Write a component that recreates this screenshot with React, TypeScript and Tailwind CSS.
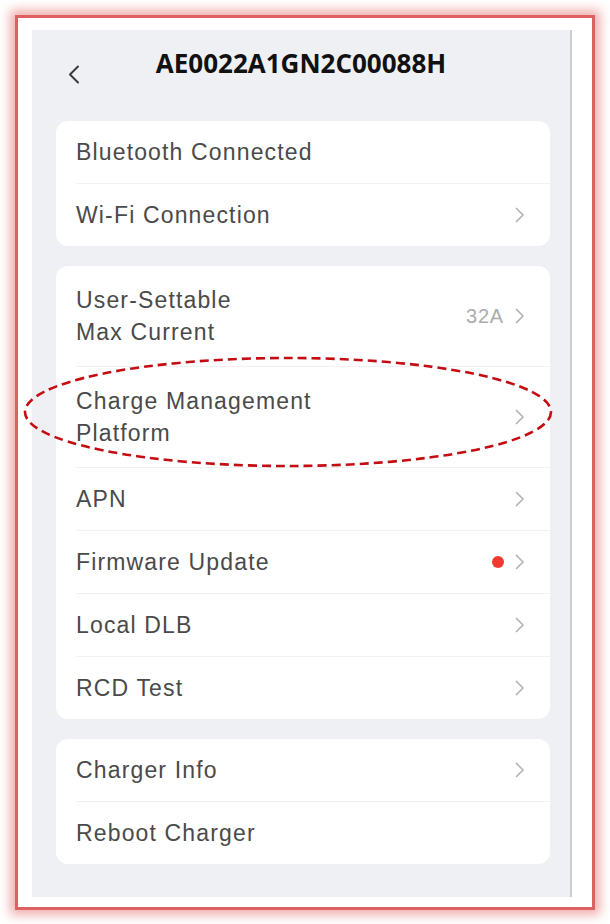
import * as React from "react";

type row = {
  label: string[];
  value?: string;
  dot?: boolean;
  arrow?: boolean;
  tall?: boolean;
};

const groups: row[][] = [
  [
    { label: ["Bluetooth Connected"] },
    { label: ["Wi-Fi Connection"], arrow: true },
  ],
  [
    { label: ["User-Settable", "Max Current"], value: "32A", arrow: true, tall: true },
    { label: ["Charge Management", "Platform"], arrow: true, tall: true },
    { label: ["APN"], arrow: true },
    { label: ["Firmware Update"], dot: true, arrow: true },
    { label: ["Local DLB"], arrow: true },
    { label: ["RCD Test"], arrow: true },
  ],
  [
    { label: ["Charger Info"], arrow: true },
    { label: ["Reboot Charger"] },
  ],
];

const Chevron = () => (
  <svg width="10" height="16" viewBox="0 0 10 16" fill="none">
    <path d="M1.5 1.5 L8 8 L1.5 14.5" stroke="#b4b4b6" strokeWidth="1.7" strokeLinecap="round" strokeLinejoin="round" />
  </svg>
);

const Row = ({ item, last }: { item: row; last: boolean }) => {
  return (
    <div className="ml-[20px]">
      <div
        className={
          "flex items-center justify-between pr-[25px] " +
          (item.tall ? "py-[18px] " : "py-[15px] ") +
          (last ? "" : "border-b border-[#f1f1f3]")
        }
      >
        <div className="text-[23px] leading-[32px] tracking-[0.05em] text-[#4a4a4a] [font-family:'Liberation_Sans',Arial,sans-serif]">
          {item.label.map((l) => (
            <div key={l}>{l}</div>
          ))}
        </div>
        <div className="flex items-center gap-[11px]">
          {item.value && (
            <span className="text-[20px] tracking-[0.04em] text-[#ababad] [font-family:'Liberation_Sans',Arial,sans-serif]">
              {item.value}
            </span>
          )}
          {item.dot && <span className="w-[12px] h-[12px] rounded-full bg-[#f23a32]" />}
          {item.arrow && <Chevron />}
        </div>
      </div>
    </div>
  );
};

const App = () => {
  return (
    <div className="w-[610px] h-[924px] bg-white pt-[18px] pl-[18px]">
      <div className="relative w-[574px] h-[889px] bg-white pt-[12px] pl-[14px] shadow-[0_0_0_3px_rgba(218,88,88,0.9),0_0_10px_8px_rgba(228,108,108,0.55)]">
        <div className="w-[540px] h-[867px] bg-[#eff0f4] border-r-2 border-[#ccccd0]">
          {/* header */}
          <div className="grid grid-cols-[1fr_auto_1fr] h-[91px]">
            <div className="pl-[35px] pt-[35px]">
              <svg width="13" height="19" viewBox="0 0 13 19" fill="none">
                <path d="M11 1.5 L3 9.5 L11 17.5" stroke="#3a3a3a" strokeWidth="2" strokeLinecap="round" strokeLinejoin="round" />
              </svg>
            </div>
            <div className="pt-[16px] text-[26px] leading-[34px] font-bold text-[#111] [font-family:'Open_Sans',sans-serif]">
              AE0022A1GN2C00088H
            </div>
            <div />
          </div>

          <div className="flex flex-col gap-[20px] pl-[24px] pr-[20px]">
            {groups.map((g, gi) => (
              <div key={gi} className="bg-white rounded-[12px]">
                {g.map((item, i) => (
                  <Row key={item.label[0]} item={item} last={i === g.length - 1} />
                ))}
              </div>
            ))}
          </div>
        </div>

        {/* hand-drawn highlight */}
        <svg className="absolute left-0 top-0 pointer-events-none" width="574" height="889" viewBox="0 0 574 889" fill="none">
          <ellipse cx="270" cy="394" rx="263" ry="54" stroke="#c40d12" strokeWidth="2.6" strokeDasharray="9 5" />
        </svg>
      </div>
    </div>
  );
};

export default App;
